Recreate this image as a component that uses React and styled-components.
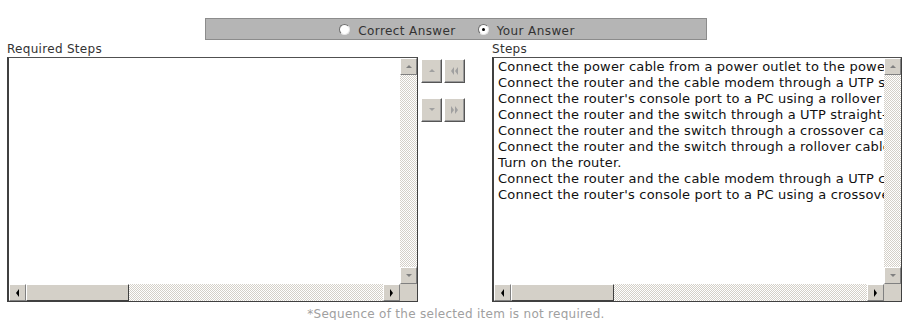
import React from 'react';
import styled, { createGlobalStyle } from 'styled-components';

const GlobalStyle = createGlobalStyle`
  body {
    margin: 0;
    background: #fff;
    font-family: 'DejaVu Sans', Verdana, sans-serif;
  }
`;

const steps = [
  'Connect the power cable from a power outlet to the power port on the router.',
  'Connect the router and the cable modem through a UTP straight-through cable.',
  "Connect the router's console port to a PC using a rollover cable.",
  'Connect the router and the switch through a UTP straight-through cable.',
  'Connect the router and the switch through a crossover cable.',
  'Connect the router and the switch through a rollover cable.',
  'Turn on the router.',
  'Connect the router and the cable modem through a UTP crossover cable.',
  "Connect the router's console port to a PC using a crossover cable.",
];

const face = '#d4d0c8';

function Arrow({ dir, color = '#808080', double }) {
  const tri = {
    up: 'M1 5 L4 2 L7 5 Z',
    down: 'M1 2 L4 5 L7 2 Z',
    left: 'M5 0 L2 4 L5 8 Z',
    right: 'M2 0 L5 4 L2 8 Z',
  }[dir];
  if (double) {
    const d = dir === 'left' ? 'M4 0 L1 4 L4 8 Z M8 0 L5 4 L8 8 Z' : 'M1 0 L4 4 L1 8 Z M5 0 L8 4 L5 8 Z';
    return (
      <svg width="9" height="8" viewBox="0 0 9 8">
        <path d={d} fill={color} />
      </svg>
    );
  }
  return (
    <svg width="8" height="8" viewBox="0 0 8 8">
      <path d={tri} fill={color} />
    </svg>
  );
}

function ListBox({ items, thumb }) {
  return (
    <Box>
      <Content>
        {items.map((s, i) => (
          <Item key={i}>{s}</Item>
        ))}
      </Content>
      <VBar>
        <ScrollBtn>
          <Arrow dir="up" />
        </ScrollBtn>
        <Track />
        <ScrollBtn>
          <Arrow dir="down" />
        </ScrollBtn>
      </VBar>
      <HBar>
        <ScrollBtn>
          <Arrow dir="left" color="#000" />
        </ScrollBtn>
        <Thumb $w={thumb} />
        <Track />
        <ScrollBtn>
          <Arrow dir="right" color="#000" />
        </ScrollBtn>
      </HBar>
      <Corner />
    </Box>
  );
}

export default function App() {
  return (
    <Page>
      <GlobalStyle />
      <Header>
        <RadioLabel>
          <Radio />
          Correct Answer
        </RadioLabel>
        <RadioLabel>
          <Radio $checked />
          Your Answer
        </RadioLabel>
      </Header>
      <Panels>
        <Column $w={411}>
          <Label>Required Steps</Label>
          <ListBox items={[]} thumb={103} />
        </Column>
        <Controls>
          <BtnRow>
            <MoveBtn>
              <Arrow dir="up" color="#a0a0a0" />
            </MoveBtn>
            <MoveBtn>
              <Arrow dir="left" double color="#a0a0a0" />
            </MoveBtn>
          </BtnRow>
          <BtnRow>
            <MoveBtn>
              <Arrow dir="down" color="#a0a0a0" />
            </MoveBtn>
            <MoveBtn>
              <Arrow dir="right" double color="#a0a0a0" />
            </MoveBtn>
          </BtnRow>
        </Controls>
        <Column $w={410}>
          <Label>Steps</Label>
          <ListBox items={steps} thumb={103} />
        </Column>
      </Panels>
      <Note>*Sequence of the selected item is not required.</Note>
    </Page>
  );
}

const Page = styled.div`
  width: 904px;
  padding-top: 18px;
  font-size: 12px;
  color: #333;
`;

const Header = styled.div`
  width: 498px;
  height: 20px;
  margin: 0 0 0 205px;
  background: #b5b5b5;
  border: 1px solid #8c8c8c;
  display: flex;
  justify-content: center;
  align-items: center;
  gap: 22px;
  padding-left: 2px;
  box-sizing: content-box;
`;

const RadioLabel = styled.label`
  display: flex;
  align-items: center;
  gap: 8px;
  color: #333;
  font-size: 12px;
  letter-spacing: 0.4px;
  line-height: 14px;
  margin-top: 3px;
`;

const Radio = styled.span`
  width: 9px;
  height: 9px;
  border-radius: 50%;
  background: #fff;
  border: 1px solid #6e6e6e;
  border-right-color: #e6e6e6;
  border-bottom-color: #e6e6e6;
  position: relative;
  margin-top: -2px;
  &::after {
    content: '';
    display: ${({ $checked }) => ($checked ? 'block' : 'none')};
    position: absolute;
    left: 3px;
    top: 3px;
    width: 3px;
    height: 3px;
    border-radius: 50%;
    background: #000;
  }
`;

const Panels = styled.div`
  display: flex;
  padding-left: 7px;
`;

const Column = styled.div`
  width: ${({ $w }) => $w}px;
  display: flex;
  flex-direction: column;
`;

const Label = styled.div`
  height: 16px;
  line-height: 16px;
  margin-top: 1px;
  color: #333;
  font-size: 12px;
  letter-spacing: 0.3px;
`;

const Controls = styled.div`
  width: 74px;
  padding: 19px 0 0 3px;
  box-sizing: border-box;
  display: flex;
  flex-direction: column;
  gap: 15px;
`;

const BtnRow = styled.div`
  display: flex;
  gap: 2px;
`;

const MoveBtn = styled.div`
  width: 21px;
  height: 24px;
  box-sizing: border-box;
  background: ${face};
  border: 1px solid;
  border-color: #fff #555 #555 #fff;
  box-shadow: inset -1px -1px #999;
  display: flex;
  align-items: center;
  justify-content: center;
`;

const Box = styled.div`
  height: 245px;
  box-sizing: border-box;
  border: 1px solid #404040;
  border-left-width: 2px;
  border-top-color: #505050;
  display: grid;
  grid-template-columns: 1fr 17px;
  grid-template-rows: 1fr 17px;
  background: #fff;
`;

const Content = styled.div`
  overflow: hidden;
  padding: 1px 0 0 4px;
  color: #111;
`;

const Item = styled.div`
  white-space: nowrap;
  font-size: 13px;
  letter-spacing: 0.18px;
  line-height: 16px;
`;

const VBar = styled.div`
  display: flex;
  flex-direction: column;
`;

const HBar = styled.div`
  display: flex;
`;

const Track = styled.div`
  flex: 1;
  background-image: repeating-conic-gradient(${face} 0 25%, #fff 0 50%);
  background-size: 2px 2px;
`;

const ScrollBtn = styled.div`
  width: 17px;
  height: 17px;
  box-sizing: border-box;
  flex: none;
  background: ${face};
  border: 1px solid;
  border-color: #fff #808080 #808080 #fff;
  display: flex;
  align-items: center;
  justify-content: center;
`;

const Thumb = styled.div`
  width: ${({ $w }) => $w}px;
  flex: none;
  box-sizing: border-box;
  background: ${face};
  border: 1px solid;
  border-color: #fff #404040 #404040 #fff;
`;

const Corner = styled.div`
  background: ${face};
`;

const Note = styled.div`
  text-align: center;
  color: #a0a0a0;
  font-size: 12px;
  letter-spacing: 0.28px;
  line-height: 16px;
  margin-top: 4px;
  padding-left: 8px;
`;
